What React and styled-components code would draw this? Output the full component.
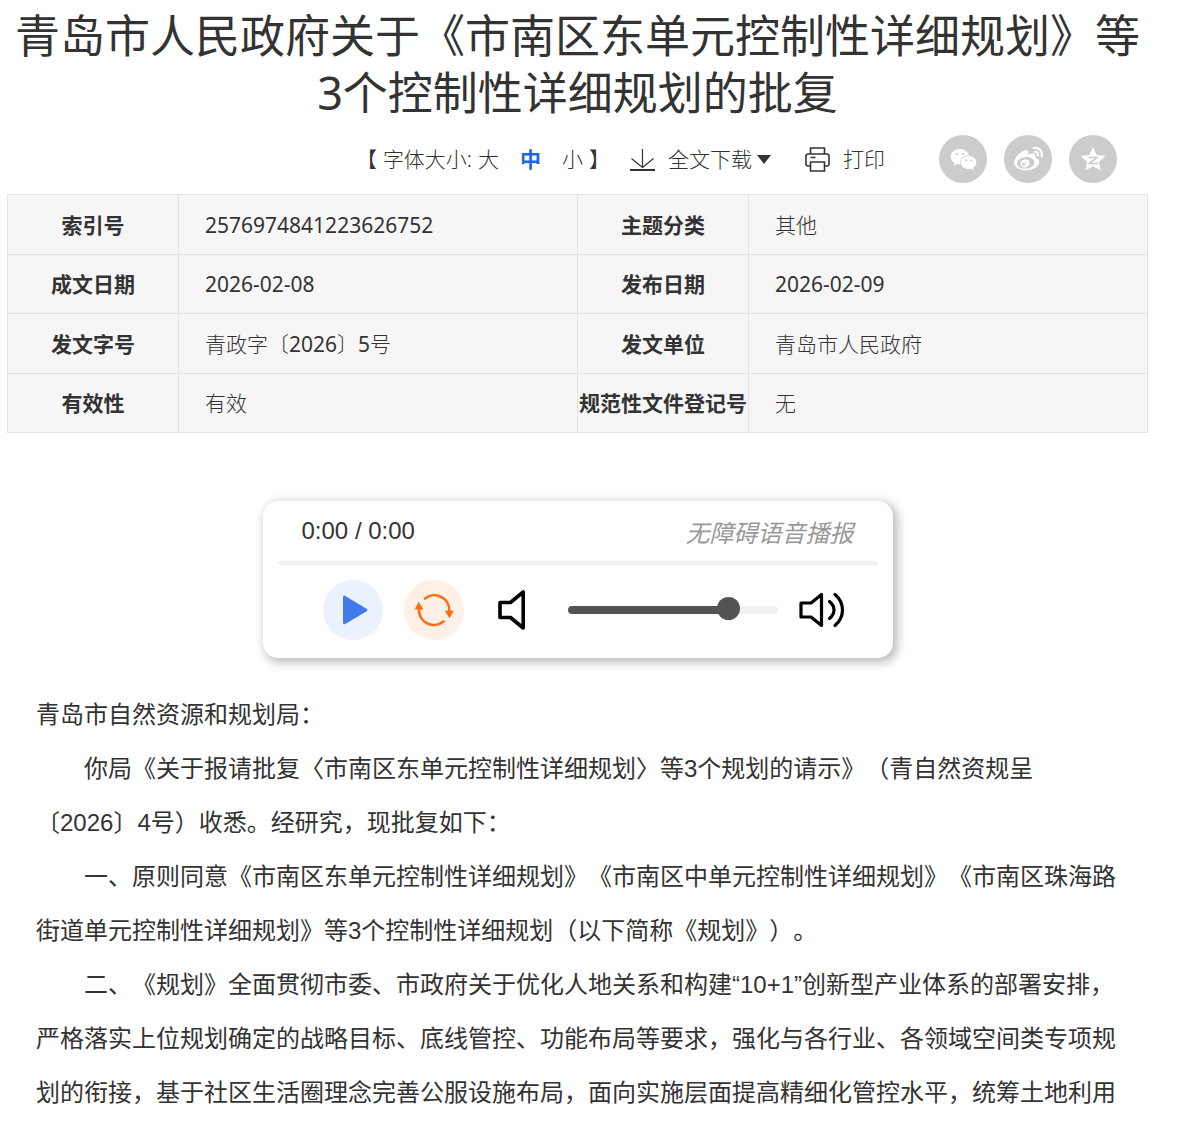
import React, { useState } from 'react';
import styled, { createGlobalStyle } from 'styled-components';
import { FaWeixin, FaWeibo } from 'react-icons/fa';

const GlobalStyle = createGlobalStyle`
  * {
    box-sizing: border-box;
  }
  body {
    margin: 0;
    background: #fff;
    color: #333;
    font-family: "Noto Sans", "Noto Sans CJK SC", sans-serif;
    text-spacing-trim: space-all;
  }
  button {
    padding: 0;
    border: 0;
    background: none;
    color: inherit;
    font: inherit;
    cursor: pointer;
  }
  svg {
    display: block;
  }
`;

const Page = styled.main`
  padding: 7px 31px 0 7px;
`;

const Title = styled.h1`
  margin: 0;
  font-size: 45px;
  line-height: 57px;
  font-weight: 400;
  text-align: center;
`;

//Toolbar
const Toolbar = styled.div`
  display: flex;
  flex-wrap: wrap;
  justify-content: flex-end;
  align-items: center;
  padding: 14px 31px 11px 0;
  font-size: 21px;
  line-height: 30px;
  font-weight: 300;
`;

const FontSizes = styled.div`
  display: flex;
  gap: 6px;
  margin-right: 20px;
`;

const SizeList = styled.div`
  display: flex;
  gap: 21px;
`;

const SizeButton = styled.button`
  &[aria-pressed='true'] {
    color: #1a6ae4;
    font-weight: 700;
  }
`;

const ToolButton = styled.button`
  display: flex;
  align-items: center;
  gap: 13px;
  margin-right: ${(props) => props.$after};
`;

const Caret = styled.span`
  margin-left: -8px;
  border: 7px solid transparent;
  border-top: 9px solid #333;
  border-bottom: 0;
`;

const Shares = styled.div`
  display: flex;
  gap: 17px;
`;

const ShareLink = styled.a`
  display: flex;
  align-items: center;
  justify-content: center;
  width: 48px;
  height: 48px;
  border-radius: 50%;
  background: #ccc;
  color: #fff;
`;

//Document info
const InfoTable = styled.table`
  width: 100%;
  table-layout: fixed;
  border-collapse: collapse;
  background: #f6f6f6;
  font-size: 21px;
  line-height: 30px;

  tr:nth-child(odd) {
    height: 60px;
  }
  tr:nth-child(even) {
    height: 59px;
  }
`;

const InfoLabel = styled.th`
  width: 15%;
  padding: 0;
  border: 1px solid #e4e4e4;
  font-weight: 700;
  white-space: nowrap;
`;

const InfoValue = styled.td`
  width: 35%;
  padding: 0 26px;
  border: 1px solid #e4e4e4;
  font-weight: 300;
`;

const Digits = styled.span`
  font-weight: 400;
`;

//Audio player
const Player = styled.section`
  max-width: 630px;
  margin: 68px auto 30px;
  padding: 0 15px 18px;
  border-radius: 15px;
  background: #fff;
  box-shadow: 3px 3px 10px 2px rgba(0, 0, 0, 0.25);
`;

const PlayerHead = styled.div`
  display: flex;
  justify-content: space-between;
  align-items: center;
  height: 60px;
  padding: 0 24px;
  font-family: "Liberation Sans", "Noto Sans CJK SC", sans-serif;
  font-size: 24px;
`;

const Caption = styled.em`
  color: #999;
`;

const Progress = styled.div`
  height: 4px;
  border-radius: 2px;
  background: #f1f1f1;
`;

const Controls = styled.div`
  display: flex;
  align-items: center;
  gap: 21px;
  padding: 15px 33px 0 45px;
`;

const RoundButton = styled.button`
  display: flex;
  align-items: center;
  justify-content: center;
  width: 60px;
  height: 60px;
  border-radius: 50%;
  background: ${(props) => props.$bg};
`;

const IconButton = styled.button`
  display: flex;
  padding: ${(props) => props.$padding || '0'};
`;

const Volume = styled.input`
  appearance: none;
  flex: 1;
  min-width: 0;
  height: 24px;
  margin: 0;
  background: transparent;

  &::-webkit-slider-runnable-track {
    height: 8px;
    border-radius: 4px;
    background: linear-gradient(
      to right,
      #545454 ${(props) => props.value}%,
      #f1f1f1 ${(props) => props.value}%
    );
  }
  &::-webkit-slider-thumb {
    appearance: none;
    width: 23px;
    height: 23px;
    margin-top: -9px;
    border-radius: 50%;
    background: #545454;
  }
`;

//Text
const Article = styled.article`
  padding: 0 29px;
  font-family: "Liberation Sans", "Noto Sans CJK SC", sans-serif;
  font-size: 24px;
  line-height: 54px;
`;

const Paragraph = styled.p`
  margin: 0;
  text-indent: ${(props) => (props.$flush ? '0' : '2em')};
`;

const DownloadIcon = () => (
  <svg width="25" height="24" viewBox="0 0 25 24" fill="none" stroke="#333">
    <path d="M12.5 2v19M1.5 11.5l11 9 11-9" strokeWidth="1.2" />
    <path d="M0 23h25" strokeWidth="2" />
  </svg>
);

const PrinterIcon = () => (
  <svg width="25" height="25" viewBox="0 0 25 25" fill="none" stroke="#333" strokeWidth="1.6">
    <path d="M5.5 7V1h14v6M5.5 19H3a2 2 0 0 1-2-2V9a2 2 0 0 1 2-2h19a2 2 0 0 1 2 2v8a2 2 0 0 1-2 2h-2.5" />
    <path d="M5.5 15h14v9h-14zM5.5 10.500h5" />
  </svg>
);

const QzoneIcon = () => (
  <svg width="26" height="26" viewBox="0 0 26 26">
    <path d="M13 1l3.600 8 8.800 1-6.500 5.900 1.800 8.600L13 20.200 5.300 24.500l1.800-8.600L.6 10l8.800-1z" fill="#fff" />
    <path d="M8.500 11.500h8.500L9.500 17.300c3 .5 5.500.5 8.500 0" fill="none" stroke="#ccc" strokeWidth="1.6" />
  </svg>
);

const PlayIcon = () => (
  <svg width="60" height="60" viewBox="0 0 60 60">
    <path
      d="M21.5 17.200v25.600L42.800 30z"
      fill="#4479ee"
      stroke="#4479ee"
      strokeWidth="3"
      strokeLinejoin="round"
    />
  </svg>
);

const ReplayIcon = () => (
  <svg width="40" height="40" viewBox="0 0 40 40" fill="none" stroke="#fd6e10">
    <path d="M11 8.500A15 15 0 0 1 35.200 22M5 18A15 15 0 0 0 29.500 31.500" strokeWidth="2.6" strokeLinecap="round" />
    <path d="M30.700 20.800h9l-4.200 7.500zM.5 19.500h9L4.800 11.800z" fill="#fd6e10" stroke="none" />
  </svg>
);

const QuietIcon = () => (
  <svg width="28" height="40" viewBox="0 0 28 40" fill="none" stroke="#000">
    <path d="M2 12.500h10.500L25.200 2v36L12.500 27.500H2z" strokeWidth="3.6" strokeLinejoin="round" />
  </svg>
);

const LoudIcon = () => (
  <svg width="46" height="36" viewBox="0 0 46 36" fill="none" stroke="#000" strokeLinecap="round">
    <path d="M2 11h10L22.500 2.500v31L12 25H2z" strokeWidth="3.2" strokeLinejoin="round" />
    <path d="M30.500 9.500c6 5 6 12 0 17M36 2.500c10 8.500 10 22.500 0 31" strokeWidth="3.2" />
  </svg>
);

const info = [
  [
    { label: '索引号', value: <Digits>2576974841223626752</Digits> },
    { label: '主题分类', value: '其他' },
  ],
  [
    { label: '成文日期', value: <Digits>2026-02-08</Digits> },
    { label: '发布日期', value: <Digits>2026-02-09</Digits> },
  ],
  [
    { label: '发文字号', value: <>青政字〔<Digits>2026</Digits>〕<Digits>5</Digits>号</> },
    { label: '发文单位', value: '青岛市人民政府' },
  ],
  [
    { label: '有效性', value: '有效' },
    { label: '规范性文件登记号', value: '无' },
  ],
];

const App = () => {
  const [size, setSize] = useState('中');
  const [volume, setVolume] = useState(80);

  return (
    <>
      <GlobalStyle />
      <Page lang="zh-CN">
        <Title>青岛市人民政府关于《市南区东单元控制性详细规划》等3个控制性详细规划的批复</Title>

        <Toolbar>
          <FontSizes>
            <span>【</span>
            <span>字体大小:</span>
            <SizeList>
              {['大', '中', '小'].map((name) => (
                <SizeButton key={name} aria-pressed={size === name} onClick={() => setSize(name)}>
                  {name}
                </SizeButton>
              ))}
            </SizeList>
            <span>】</span>
          </FontSizes>
          <ToolButton $after="34px">
            <DownloadIcon />
            全文下载
            <Caret />
          </ToolButton>
          <ToolButton $after="54px">
            <PrinterIcon />
            打印
          </ToolButton>
          <Shares>
            <ShareLink href="#" aria-label="微信">
              <FaWeixin size={27} />
            </ShareLink>
            <ShareLink href="#" aria-label="微博">
              <FaWeibo size={29} />
            </ShareLink>
            <ShareLink href="#" aria-label="QQ空间">
              <QzoneIcon />
            </ShareLink>
          </Shares>
        </Toolbar>

        <InfoTable>
          <tbody>
            {info.map((row) => (
              <tr key={row[0].label}>
                {row.map((item) => (
                  <React.Fragment key={item.label}>
                    <InfoLabel scope="row">{item.label}</InfoLabel>
                    <InfoValue>{item.value}</InfoValue>
                  </React.Fragment>
                ))}
              </tr>
            ))}
          </tbody>
        </InfoTable>

        <Player>
          <PlayerHead>
            <span>0:00 / 0:00</span>
            <Caption>无障碍语音播报</Caption>
          </PlayerHead>
          <Progress />
          <Controls>
            <RoundButton $bg="#ecf1fe" aria-label="播放">
              <PlayIcon />
            </RoundButton>
            <RoundButton $bg="#feefe7" aria-label="重播">
              <ReplayIcon />
            </RoundButton>
            <IconButton $padding="0 21px 0 13px" aria-label="静音" onClick={() => setVolume(0)}>
              <QuietIcon />
            </IconButton>
            <Volume
              type="range"
              min="0"
              max="100"
              aria-label="音量"
              value={volume}
              onChange={(e) => setVolume(Number(e.target.value))}
            />
            <IconButton aria-label="最大音量" onClick={() => setVolume(100)}>
              <LoudIcon />
            </IconButton>
          </Controls>
        </Player>

        <Article>
          <Paragraph $flush>青岛市自然资源和规划局：</Paragraph>
          <Paragraph>
            你局《关于报请批复〈市南区东单元控制性详细规划〉等3个规划的请示》（青自然资规呈〔2026〕4号）收悉。经研究，现批复如下：
          </Paragraph>
          <Paragraph>
            一、原则同意《市南区东单元控制性详细规划》《市南区中单元控制性详细规划》《市南区珠海路街道单元控制性详细规划》等3个控制性详细规划（以下简称《规划》）。
          </Paragraph>
          <Paragraph>
            二、《规划》全面贯彻市委、市政府关于优化人地关系和构建“10+1”创新型产业体系的部署安排，严格落实上位规划确定的战略目标、底线管控、功能布局等要求，强化与各行业、各领域空间类专项规划的衔接，基于社区生活圈理念完善公服设施布局，面向实施层面提高精细化管控水平，统筹土地利用
          </Paragraph>
        </Article>
      </Page>
    </>
  );
};

export default App;
